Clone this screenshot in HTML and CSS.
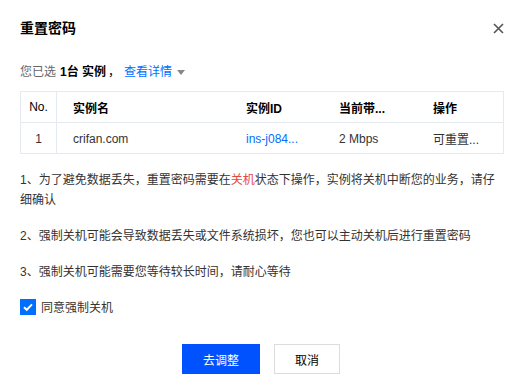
FILE: index.html
```
<!DOCTYPE html>
<html lang="zh-CN">
  <head>
    <meta charset="UTF-8">
    <title>重置密码</title>
    <link rel="stylesheet" href="styles.css">
  </head>
  <body>
    <div class="dialog">
      <div class="dialog-header">
        <h3 class="dialog-title">重置密码</h3>
        <span class="close-btn">
          <svg width="11" height="11" viewBox="0 0 11 11">
            <path d="M1 1 L10 10 M10 1 L1 10" stroke="#555" stroke-width="1.6" fill="none"/>
          </svg>
        </span>
      </div>

      <div class="selected">
        <span class="muted">您已选</span>
        <b>1台 实例</b>，
        <a href="#detail" class="link">查看详情</a>
        <span class="caret"></span>
      </div>

      <table class="grid">
        <thead>
          <tr>
            <th class="col-no">No.</th>
            <th class="col-name">实例名</th>
            <th class="col-id">实例ID</th>
            <th class="col-bw">当前带...</th>
            <th class="col-op">操作</th>
          </tr>
        </thead>
        <tbody>
          <tr>
            <td class="col-no">1</td>
            <td>crifan.com</td>
            <td><a href="#id" class="link">ins-j084...</a></td>
            <td>2 Mbps</td>
            <td>可重置...</td>
          </tr>
        </tbody>
      </table>

      <div class="notes">
        <p>1、为了避免数据丢失，重置密码需要在<span class="danger">关机</span>状态下操作，实例将关机中断您的业务，请仔细确认</p>
        <p>2、强制关机可能会导致数据丢失或文件系统损坏，您也可以主动关机后进行重置密码</p>
        <p>3、强制关机可能需要您等待较长时间，请耐心等待</p>
      </div>

      <label class="check">
        <span class="check-box">
          <svg width="16" height="16" viewBox="0 0 16 16">
            <path d="M4 8.2 L6.8 10.8 L12 5.4" stroke="#fff" stroke-width="2" fill="none"/>
          </svg>
        </span>
        同意强制关机
      </label>

      <div class="dialog-footer">
        <button class="btn btn-primary">去调整</button>
        <button class="btn">取消</button>
      </div>
    </div>
  </body>
</html>
```

FILE: styles.css
```
/* Base */
body {
  margin: 0;
  background-color: #fff;
  font-family: "Liberation Sans", "Noto Sans CJK SC", sans-serif;
  font-size: 12px;
  color: #333;
}

.dialog {
  padding: 20px 18px 18px 20px;
}

/* Header */
.dialog-header {
  display: flex;
  justify-content: space-between;
  align-items: center;
  height: 16px;
}

.dialog-title {
  margin: 0;
  font-size: 14px;
  font-weight: bold;
  color: #000;
  line-height: 16px;
}

.close-btn {
  display: flex;
  width: 11px;
  height: 11px;
  cursor: pointer;
}

/* Selection summary */
.selected {
  display: flex;
  align-items: center;
  margin-top: 26px;
  line-height: 20px;
  color: #000;
}

.selected .muted {
  color: #666;
  margin-right: 4px;
}

.selected b {
  margin-right: 2px;
}

.link {
  color: #006eff;
  text-decoration: none;
}

.selected .link {
  margin-left: 4px;
}

.caret {
  display: inline-block;
  margin-left: 5px;
  width: 0;
  height: 0;
  border-left: 4px solid transparent;
  border-right: 4px solid transparent;
  border-top: 5px solid #888;
}

/* Table */
.grid {
  width: 484px;
  margin-top: 9px;
  border-collapse: collapse;
  border: 1px solid #e5e9f0;
  table-layout: fixed;
}

.grid th,
.grid td {
  height: 30px;
  padding: 0 0 0 16px;
  text-align: left;
  white-space: nowrap;
  overflow: hidden;
}

.grid th {
  font-weight: bold;
  color: #000;
  border-bottom: 1px solid #e5e9f0;
}

.grid td {
  height: 29px;
  padding-top: 1px;
  color: #333;
}

.grid .col-no {
  width: 35px;
  padding-left: 0;
  text-align: center;
  border-right: 1px solid #e5e9f0;
  font-weight: normal;
}

.grid .col-name { width: 157px; }
.grid .col-id { width: 77px; }
.grid .col-bw { width: 78px; }

/* Notes */
.notes {
  margin-top: 16px;
  width: 484px;
}

.notes p {
  margin: 0 0 16px;
  line-height: 20px;
  color: #333;
}

.danger {
  color: #e54545;
}

/* Checkbox */
.check {
  display: flex;
  align-items: center;
  margin-top: 16px;
  color: #333;
}

.check-box {
  display: flex;
  width: 16px;
  height: 16px;
  margin-right: 5px;
  background-color: #006eff;
}

/* Footer */
.dialog-footer {
  display: flex;
  justify-content: center;
  gap: 14px;
  margin-top: 29px;
  padding-right: 2px;
}

.btn {
  height: 30px;
  min-width: 66px;
  padding: 0 20px;
  font-family: inherit;
  font-size: 12px;
  background-color: #fff;
  color: #000;
  border: 1px solid #dcdcdc;
  cursor: pointer;
}

.btn-primary {
  min-width: 78px;
  background-color: #0052ff;
  border-color: #0052ff;
  color: #fff;
}
```
